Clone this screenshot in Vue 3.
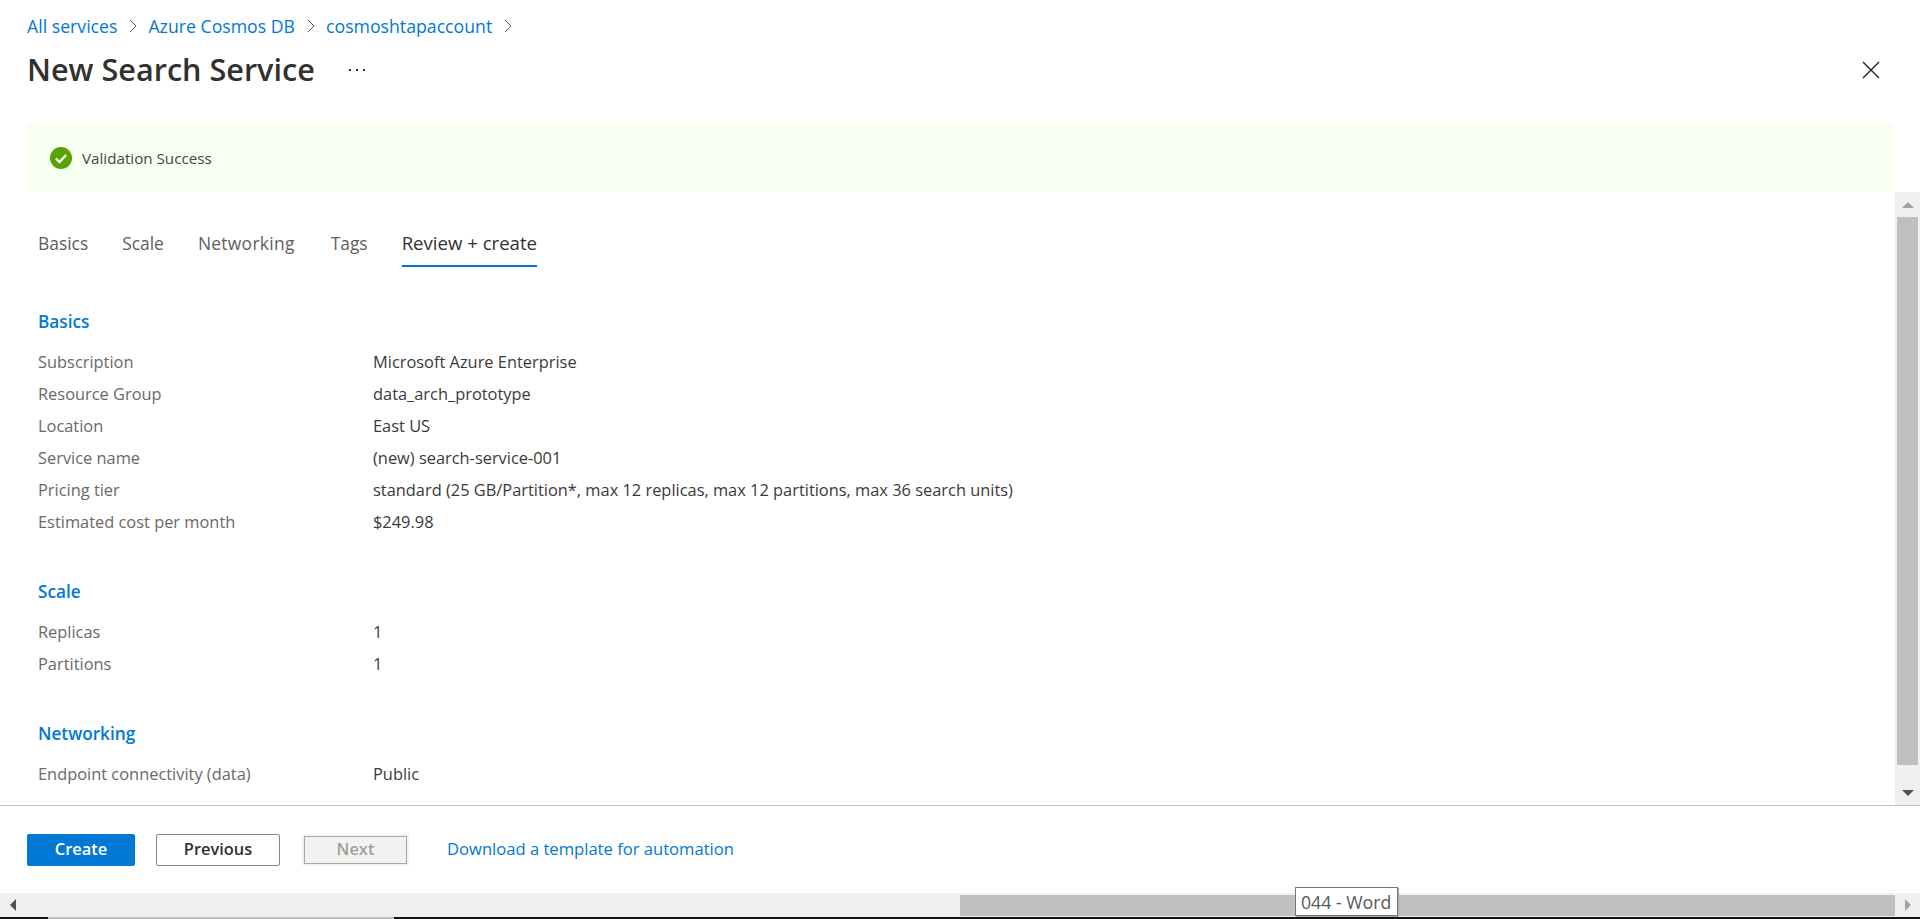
<script setup>
const tabs = ['Basics', 'Scale', 'Networking', 'Tags']
const sections = [
  { title: 'Basics', rows: [
    ['Subscription', 'Microsoft Azure Enterprise'],
    ['Resource Group', 'data_arch_prototype'],
    ['Location', 'East US'],
    ['Service name', '(new) search-service-001'],
    ['Pricing tier', 'standard (25 GB/Partition*, max 12 replicas, max 12 partitions, max 36 search units)'],
    ['Estimated cost per month', '$249.98'],
  ]},
  { title: 'Scale', rows: [['Replicas', '1'], ['Partitions', '1']] },
  { title: 'Networking', rows: [['Endpoint connectivity (data)', 'Public']] },
]
const crumbs = ['All services', 'Azure Cosmos DB', 'cosmoshtapaccount']
</script>

<template>
  <div class="page">
    <header class="head">
      <nav class="crumbs">
        <template v-for="c in crumbs" :key="c">
          <a class="crumb">{{ c }}</a>
          <svg class="chev" width="8" height="14" viewBox="0 0 8 14"><path d="M1 1l6 6-6 6" fill="none" stroke="#605e5c" stroke-width="1"/></svg>
        </template>
      </nav>
      <div class="title-row">
        <h1 class="title">New Search Service</h1>
        <span class="more">
          <i></i><i></i><i></i>
        </span>
        <svg class="close" width="18" height="18" viewBox="0 0 18 18"><path d="M1 1l16 16M17 1L1 17" stroke="#201f1e" stroke-width="1.3" fill="none"/></svg>
      </div>
    </header>

    <div class="banner-wrap">
      <div class="banner">
        <svg width="22" height="22" viewBox="0 0 22 22"><circle cx="11" cy="11" r="11" fill="#57a300"/><path d="M6 11.5l3.5 3.5L16 8" fill="none" stroke="#fff" stroke-width="2.4"/></svg>
        <span>Validation Success</span>
      </div>
    </div>

    <div class="middle">
      <main class="content">
        <div class="tabs">
          <span v-for="t in tabs" :key="t" class="tab">{{ t }}</span>
          <span class="tab active">Review + create</span>
        </div>
        <section v-for="s in sections" :key="s.title" class="section">
          <h2 class="sec-title">{{ s.title }}</h2>
          <div v-for="r in s.rows" :key="r[0]" class="row">
            <span class="label">{{ r[0] }}</span>
            <span class="value">{{ r[1] }}</span>
          </div>
        </section>
      </main>
      <div class="vscroll">
        <button class="vbtn"><span class="tri up"></span></button>
        <div class="vthumb"></div>
        <div class="vrest"></div>
        <button class="vbtn"><span class="tri down"></span></button>
      </div>
    </div>

    <footer class="foot">
      <button class="btn primary">Create</button>
      <button class="btn secondary">Previous</button>
      <button class="btn disabled"><span>Next</span></button>
      <a class="tpl">Download a template for automation</a>
    </footer>

    <div class="hscroll">
      <button class="hbtn"><span class="tri left"></span></button>
      <div class="hrest"></div>
      <div class="hthumb"></div>
      <button class="hbtn"><span class="tri right"></span></button>
      <div class="tooltip">044 - Word</div>
    </div>
    <div class="taskbar"><span class="tb-gray"></span></div>
  </div>
</template>

<style>
html, body { margin: 0; background: #fff; overflow: hidden; }
</style>

<style scoped>
.page {
  width: 1920px; height: 919px; display: flex; flex-direction: column;
  font-family: "Open Sans", "Noto Sans", sans-serif; font-size: 16.4px; color: #323130;
  background: #fff; overflow: hidden;
}
.head { padding: 14px 27px 0; height: 110px; box-sizing: border-box; flex: none; }
.crumbs { display: flex; align-items: center; height: 24px; gap: 11.5px; }
.crumb { color: #0078d4; font-size: 17.7px; }
.title-row { display: flex; align-items: center; margin-top: 10px; height: 44px; }
.title { margin: 0 0 2px; font-size: 30.6px; font-weight: 600; color: #323130; }
.more { display: flex; gap: 5px; margin-left: 34px; }
.more i { width: 2px; height: 2px; background: #323130; display: block; }
.close { margin-left: auto; margin-right: 13px; }
.banner-wrap { flex: none; padding: 14px 27px 0; }
.banner {
  height: 68px; width: 1866px; background: #f7fff0;
  display: flex; align-items: center; gap: 10px; padding-left: 23px; box-sizing: border-box;
  font-size: 15.2px; color: #484644;
}
.middle { flex: 1; display: flex; min-height: 0; }
.content { flex: 1; padding: 0 38px; overflow: hidden; }
.tabs { display: flex; gap: 34px; height: 76px; align-items: flex-start; padding-top: 39px; box-sizing: border-box; }
.tab { color: #605e5c; font-size: 17.4px; height: 36px; line-height: 24px; box-sizing: border-box; }
.tab:nth-child(3) { letter-spacing: .3px; }
.tab:nth-child(4) { margin-left: 2px; }
.tab.active { color: #323130; font-size: 18.6px; font-weight: 500; border-bottom: 2px solid #0078d4; }
.section { margin-top: 39px; }
.sec-title { margin: 0 0 9px; font-size: 17.2px; font-weight: 600; color: #0078d4; line-height: 30px; }
.row { display: flex; height: 32px; line-height: 32px; font-size: 16.4px; }
.label { width: 335px; color: #6b6967; }
.value { color: #3b3a39; }
.vscroll { width: 25px; background: #f0f0f0; display: flex; flex-direction: column; align-items: center; flex: none; }
.vbtn { height: 25px; width: 25px; border: 0; padding: 0; background: #f0f0f0; display: flex; align-items: center; justify-content: center; flex: none; }
.vthumb { width: 21px; height: 548px; background: #bfbfbf; flex: none; }
.vrest { flex: 1; }
.tri { display: block; width: 0; height: 0; border: 6px solid transparent; }
.tri.up { border-bottom-color: #a3a3a3; border-top: 0; }
.tri.down { border-top-color: #505050; border-bottom: 0; }
.tri.left { border-right-color: #505050; border-left: 0; }
.tri.right { border-left-color: #a3a3a3; border-right: 0; }
.foot { flex: none; height: 88px; border-top: 1px solid #bdbdbd; box-sizing: border-box; display: flex; align-items: center; padding-left: 27px; }
.btn { font-family: inherit; font-size: 16.4px; font-weight: 600; height: 32px; box-sizing: border-box; border-radius: 2px; padding: 0 0 2px; }
.primary { width: 108px; background: #0078d4; color: #fff; border: 0; }
.secondary { width: 124px; background: #fff; color: #323130; border: 1px solid #8a8886; margin-left: 21px; }
.disabled { width: 107px; background: #f3f2f1; color: #a19f9d; border: 0; margin-left: 22px; padding: 2px; }
.disabled span { display: block; height: 100%; line-height: 24px; border: 1px solid #a8a8a8; box-sizing: border-box; }
.tpl { color: #0078d4; font-size: 16.6px; margin: 0 0 2px 38px; }
.hscroll { flex: none; height: 24px; background: #f0f0f0; display: flex; position: relative; }
.hbtn { width: 25px; border: 0; padding: 0; background: #f0f0f0; display: flex; align-items: center; justify-content: center; flex: none; }
.hrest { width: 935px; flex: none; }
.hthumb { flex: 1; background: #bfbfbf; margin: 2px 0 1px; }
.tooltip {
  position: absolute; left: 1295px; top: -6px; width: 103px; height: 29px; box-sizing: border-box;
  border: 1px solid #767676; background: #fff; color: #575757; font-size: 17.7px; line-height: 28px; padding-left: 5px; white-space: nowrap;
  box-shadow: 1px 1px 1px #aaa;
}
.taskbar { flex: none; height: 2px; background: #111; position: relative; }
.tb-gray { position: absolute; left: 48px; width: 346px; top: 0; bottom: 0; background: #bfbfbf; }
</style>
